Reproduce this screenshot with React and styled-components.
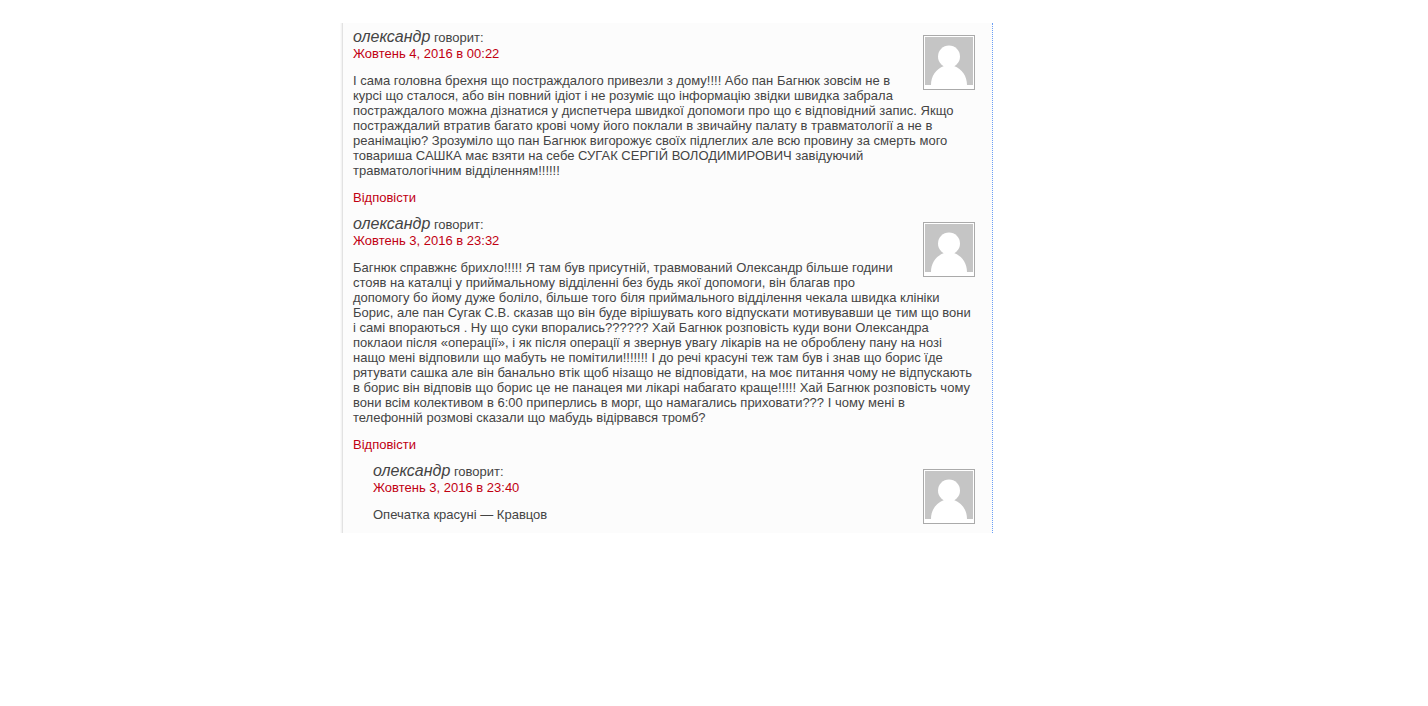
import React from "react";
import styled, { createGlobalStyle } from "styled-components";

const GlobalStyle = createGlobalStyle`
  * { box-sizing: border-box; }
  body {
    margin: 0;
    background: #fff;
    color: #444;
    font: 13px/15px "Liberation Sans", Arial, sans-serif;
  }
`;

const Page = styled.main`
  display: grid;
  grid-template-columns: 340fr 653fr 435fr;
  padding: 23px 0;
`;

const CommentList = styled.ol`
  grid-column: 2;
  margin: 0;
  padding: 0 9px 3px 13px;
  list-style: none;
  background: linear-gradient(to right, #fbfbfb 0 1px, #f3f3f3 1px 2px, #e2e2e2 2px 3px, #fcfcfc 3px);
  border-right: 1px dotted #6b9ff5;
`;

const CommentItem = styled.li`
  padding: 5px 0;
  margin-left: ${(p) => (p.$reply ? "20px" : "0")};
`;

const Avatar = styled.svg`
  float: right;
  width: 52px;
  height: 55px;
  margin: 7px 8px 6px 10px;
  padding: 1px 1px 4px;
  border: 1px solid #aaa;
  background: #fff;
`;

const Author = styled.div`
  line-height: 17px;
`;

const Name = styled.cite`
  font-size: 16px;
`;

const Link = styled.a`
  color: #c10012;
  text-decoration: none;
`;

const Body = styled.p`
  margin: 12px 0 0;
`;

const Actions = styled.div`
  margin-top: 12px;
`;

const comments = [
  {
    date: "Жовтень 4, 2016 в 00:22",
    canReply: true,
    lines: [
      "І сама головна брехня що постраждалого привезли з дому!!!! Або пан Багнюк зовсім не в",
      "курсі що сталося, або він повний ідіот і не розуміє що інформацію звідки швидка забрала",
      "постраждалого можна дізнатися у диспетчера швидкої допомоги про що є відповідний запис. Якщо",
      "постраждалий втратив багато крові чому його поклали в звичайну палату в травматології а не в",
      "реанімацію? Зрозуміло що пан Багнюк вигорожує своїх підлеглих але всю провину за смерть мого",
      "товариша САШКА має взяти на себе СУГАК СЕРГІЙ ВОЛОДИМИРОВИЧ завідуючий",
      "травматологічним відділенням!!!!!!",
    ],
  },
  {
    date: "Жовтень 3, 2016 в 23:32",
    canReply: true,
    lines: [
      "Багнюк справжнє брихло!!!!! Я там був присутній, травмований Олександр більше години",
      "стояв на каталці у приймальному відділенні без будь якої допомоги, він благав про",
      "допомогу бо йому дуже боліло, більше того біля приймального відділення чекала швидка клініки",
      "Борис, але пан Сугак С.В. сказав що він буде вірішувать кого відпускати мотивувавши це тим що вони",
      "і самі впораються . Ну що суки впорались?????? Хай Багнюк розповість куди вони Олександра",
      "поклаои після «операції», і як після операції я звернув увагу лікарів на не оброблену пану на нозі",
      "нащо мені відповили що мабуть не помітили!!!!!!! І до речі красуні теж там був і знав що борис їде",
      "рятувати сашка але він банально втік щоб нізащо не відповідати, на моє питання чому не відпускають",
      "в борис він відповів що борис це не панацея ми лікарі набагато краще!!!!! Хай Багнюк розповість чому",
      "вони всім колективом в 6:00 приперлись в морг, що намагались приховати??? І чому мені в",
      "телефонній розмові сказали що мабудь відірвався тромб?",
    ],
  },
  {
    date: "Жовтень 3, 2016 в 23:40",
    reply: true,
    lines: ["Опечатка красуні — Кравцов"],
  },
];

function Comment({ date, lines, reply, canReply }) {
  return (
    <CommentItem $reply={reply}>
      <Avatar viewBox="0 0 48 48" aria-hidden="true">
        <rect width="48" height="48" fill="#c5c5c5" />
        <circle cx="24" cy="19.500" r="11" fill="#fff" />
        <path d="M6 48C6 39 11 32 19 29V27H29V29C37 32 42 39 42 48Z" fill="#fff" />
      </Avatar>
      <Author>
        <Name>олександр</Name> говорит:
      </Author>
      <Link href="#comment">{date}</Link>
      <Body>
        {lines.map((line, i) => (
          <React.Fragment key={i}>
            {i > 0 && <br />}
            {line}
          </React.Fragment>
        ))}
      </Body>
      {canReply && (
        <Actions>
          <Link href="#respond">Відповісти</Link>
        </Actions>
      )}
    </CommentItem>
  );
}

export default function App() {
  return (
    <>
      <GlobalStyle />
      <Page>
        <CommentList>
          {comments.map((c) => (
            <Comment key={c.date} {...c} />
          ))}
        </CommentList>
      </Page>
    </>
  );
}
